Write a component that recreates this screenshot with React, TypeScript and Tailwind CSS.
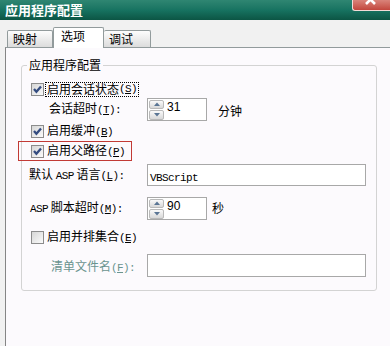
import React from "react";

const mono = "font-['Liberation_Mono','Noto_Sans_CJK_SC',monospace] text-[11px] tracking-[-0.6px]";

function Key({ k }: { k: string }) {
  return (
    <span className={mono}>
      (<span className="underline underline-offset-[1px]">{k}</span>)
    </span>
  );
}

function Check({ checked }: { checked?: boolean }) {
  return (
    <span className="flex h-[13px] w-[13px] shrink-0 items-center justify-center border border-[#8c8c8c] bg-gradient-to-br from-[#d6d6d6] to-[#fbfbfb]">
      {checked && (
        <svg width="11" height="11" viewBox="0 0 11 11">
          <path d="M2 5 L4.4 7.8 L9 2.4" fill="none" stroke="#344c80" strokeWidth="2.3" />
        </svg>
      )}
    </span>
  );
}

function SpinBtn({ up }: { up?: boolean }) {
  return (
    <span className="flex h-[10px] w-[15px] items-center justify-center rounded-[2px] border border-[#b9b9b9] bg-gradient-to-b from-[#fafafa] to-[#d8d8d8]">
      <svg width="6" height="4" viewBox="0 0 6 4">
        <path d={up ? "M0 4 L3 0.5 L6 4 Z" : "M0 0 L3 3.5 L6 0 Z"} fill="#5a7594" />
      </svg>
    </span>
  );
}

function Spinner({ value }: { value: string }) {
  return (
    <div className="flex h-[23px] w-[60px] shrink-0 border border-[#a8a8a8] bg-white">
      <div className="flex flex-col gap-px pl-px pt-px">
        <SpinBtn up />
        <SpinBtn />
      </div>
      <span className="ml-[3px] pt-[1px] font-['Liberation_Sans',sans-serif] text-[12px] leading-[14px]">
        {value}
      </span>
    </div>
  );
}

export default function App() {
  return (
    <div className="flex h-[346px] w-[390px] flex-col overflow-hidden bg-[#f1f1f1] font-['Noto_Sans_CJK_SC',sans-serif] text-[12px] text-black">
      {/* title bar */}
      <div className="flex h-[20px] shrink-0 items-start justify-between bg-gradient-to-b from-[#2f8672] via-[#177361] to-[#0c5544]">
        <span className="pl-[5px] text-[13px] font-bold leading-[19px] text-white">应用程序配置</span>
        <div className="h-[11px] w-[38px] overflow-hidden rounded-bl-[3px] border-b border-l border-[#f3dcd8] bg-gradient-to-b from-[#d9837a] to-[#c2463d]">
          <svg width="38" height="11" viewBox="0 0 38 11">
            <path d="M13 -5 L22 4 M22 -5 L13 4" stroke="#fff" strokeWidth="2.6" />
          </svg>
        </div>
      </div>

      {/* tabs */}
      <div className="flex h-[27px] shrink-0 items-end pl-[7px]">
        <div className="h-[17px] w-[46px] rounded-t-[2px] border border-b-0 border-[#929b9c] bg-gradient-to-b from-[#fdfdfd] to-[#dcdcdc] pl-[5px] leading-[16px]">
          映射
        </div>
        <div className="relative z-10 -mb-px h-[21px] w-[51px] rounded-t-[2px] border border-b-0 border-[#929b9c] bg-white pl-[7px] pt-[1px] leading-[14px]">
          选项
        </div>
        <div className="h-[17px] w-[47px] rounded-t-[2px] border border-b-0 border-l-0 border-[#929b9c] bg-gradient-to-b from-[#fdfdfd] to-[#dcdcdc] pl-[5px] leading-[16px]">
          调试
        </div>
      </div>

      {/* page */}
      <div className="ml-[5px] flex-1 border-l border-t border-l-[#858585] border-t-[#929b9c] bg-[#fcfafd] pl-[15px] pt-[10px]">
        <fieldset className="w-[356px] rounded-[3px] border border-[#d3d3d3]">
          <legend className="ml-[5px] px-[2px] leading-[14px]">应用程序配置</legend>
          <div className="flex flex-col pb-[13px] pt-[9px]">
            <div className="flex h-[16px] items-center pl-[9px]">
              <Check checked />
              <span className="ml-px flex h-[15px] items-center border border-dotted border-black px-[1px]">
                启用会话状态<Key k="S" />
              </span>
            </div>

            <div className="flex h-[24px] items-center">
              <span className="w-[125px] shrink-0 pl-[27px]">
                会话超时<Key k="T" />
                <span className={mono}>:</span>
              </span>
              <Spinner value="31" />
              <span className="ml-[11px] pt-[3px]">分钟</span>
            </div>

            <div className="mt-[2px] flex h-[16px] items-center pl-[9px]">
              <Check checked />
              <span className="ml-px border border-transparent px-[1px]">
                启用缓冲<Key k="B" />
              </span>
            </div>

            <div className="mt-[2px] flex h-[20px]">
              <div className="-ml-[4px] flex h-[20px] w-[114px] items-center border border-[#c23a35] pl-[12px]">
                <Check checked />
                <span className="ml-px border border-transparent px-[1px]">
                  启用父路径<Key k="P" />
                </span>
              </div>
            </div>

            <div className="mt-[3px] flex h-[22px] items-center">
              <span className="w-[125px] shrink-0 pl-[7px]">
                默认 <span className={mono}>ASP</span> 语言<Key k="L" />
                <span className={mono}>:</span>
              </span>
              <div className="h-[22px] w-[219px] border border-[#a8a8a8] bg-white pl-[2px] pt-[2px]">
                <span className="font-['Liberation_Mono',monospace] text-[11px] leading-[14px] tracking-[-0.6px]">
                  VBScript
                </span>
              </div>
            </div>

            <div className="mt-[11px] flex h-[22px] items-center">
              <span className="w-[125px] shrink-0 pl-[8px]">
                <span className={mono}>ASP</span> 脚本超时<Key k="M" />
                <span className={mono}>:</span>
              </span>
              <Spinner value="90" />
              <span className="ml-[5px]">秒</span>
            </div>

            <div className="mt-[10px] flex h-[16px] items-center pl-[9px]">
              <Check />
              <span className="ml-px border border-transparent px-[1px]">
                启用并排集合<Key k="E" />
              </span>
            </div>

            <div className="mt-[9px] flex h-[23px] items-center">
              <span className="w-[125px] shrink-0 pl-[29px] pt-[2px] text-[#6a948f]">
                清单文件名<Key k="F" />
                <span className={mono}>:</span>
              </span>
              <div className="h-[23px] w-[219px] border border-[#a8a8a8] bg-white" />
            </div>
          </div>
        </fieldset>
      </div>
    </div>
  );
}
